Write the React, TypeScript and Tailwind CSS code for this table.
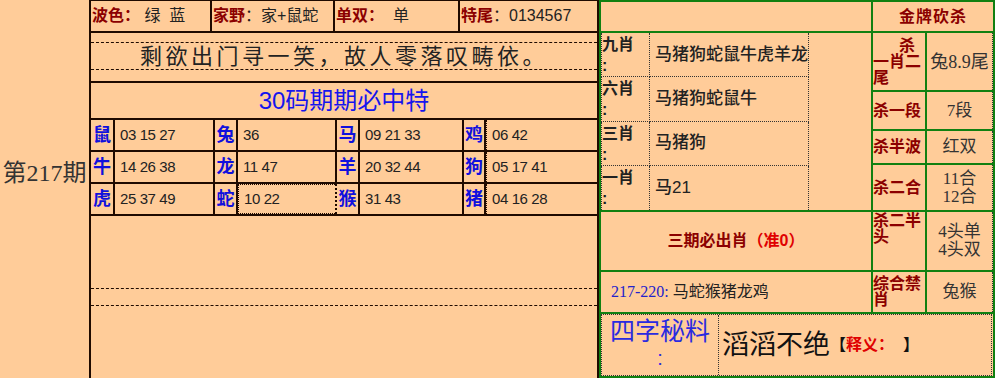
import React from "react";

const dark = "border-[#1f0a00]";
const serif = { fontFamily: '"Liberation Serif", "Noto Sans CJK SC", serif' };
const sans = { fontFamily: '"Liberation Sans", "Noto Sans CJK SC", sans-serif' };

const grid: [string, string][][] = [
  [["鼠", "03 15 27"], ["兔", "36"], ["马", "09 21 33"], ["鸡", "06 42"]],
  [["牛", "14 26 38"], ["龙", "11 47"], ["羊", "20 32 44"], ["狗", "05 17 41"]],
  [["虎", "25 37 49"], ["蛇", "10 22"], ["猴", "31 43"], ["猪", "04 16 28"]],
];

const xiao = [
  ["九肖", "马猪狗蛇鼠牛虎羊龙"],
  ["六肖", "马猪狗蛇鼠牛"],
  ["三肖", "马猪狗"],
  ["一肖", "马21"],
];

function Label({ children }: { children: React.ReactNode }) {
  return <span className="font-bold text-[#8b0000]">{children}</span>;
}

function MiddlePanel() {
  const colW = ["w-[24px]", "w-[100px]", "w-[23px]", "w-[99px]", "w-[23px]", "w-[104px]", "w-[22px]", "flex-1"];
  return (
    <div className={`w-[510px] h-full flex flex-col border-x-2 border-t ${dark}`} style={sans}>
      <div className={`h-[32px] flex border-b-2 ${dark} text-[16px] text-[#222] whitespace-pre`}>
        <div className={`w-[121px] border-r-2 ${dark} flex items-center pl-[1px]`}>
          <Label>波色：</Label>
          {" 绿  蓝"}
        </div>
        <div className={`w-[123px] border-r-2 ${dark} flex items-center pl-[1px]`}>
          <Label>家野</Label>
          {"：家+鼠蛇"}
        </div>
        <div className={`w-[125px] border-r-2 ${dark} flex items-center pl-[1px]`}>
          <Label>单双：</Label>
          {"  单"}
        </div>
        <div className="flex-1 flex items-center pl-[1px]">
          <Label>特尾</Label>
          {"：0134567"}
        </div>
      </div>
      <div className={`h-[50px] pt-[9px] border-b-2 ${dark}`}>
        <div
          className="h-[28px] border-y border-dashed border-[#1f0a00] flex items-center justify-center text-[22px] tracking-[3.5px] text-[#222]"
          style={serif}
        >
          剩欲出门寻一笑，故人零落叹畴依。
        </div>
      </div>
      <div className={`h-[37px] border-b-2 ${dark} flex items-center justify-center text-[24px] text-[#1515ee]`}>
        30码期期必中特
      </div>
      <div className="flex flex-col">
        {grid.map((row, r) => (
          <div key={r} className={`h-[32px] flex border-b-2 ${dark}`}>
            {row.flatMap(([z, n], c) => [
              <div
                key={`z${c}`}
                className={`${colW[c * 2]} border-r-2 ${dark} flex items-center justify-center text-[18px] font-bold text-[#1010dd]`}
                style={serif}
              >
                {z}
              </div>,
              <div
                key={`n${c}`}
                className={`${colW[c * 2 + 1]} ${c < 3 ? `border-r-2 ${dark}` : "border-l border-dotted border-[#1f0a00]"} ${
                  r === 2 && c === 1 ? "border border-dotted border-[#1f0a00]" : ""
                } flex items-center pl-[5px] text-[15px] tracking-[-0.4px] text-[#222] whitespace-pre`}
              >
                {n}
              </div>,
            ])}
          </div>
        ))}
      </div>
      <div className="flex-1">
        <div className="mt-[72px] h-[18px] border-y border-dashed border-[#1f0a00]" />
      </div>
    </div>
  );
}

function KillRow({ h, label, value, last }: { h: string; label: React.ReactNode; value: React.ReactNode; last?: boolean }) {
  return (
    <div className={`${h} flex ${last ? "" : "border-b-2 border-[#118011]"}`}>
      <div className="w-[54px] border-r-2 border-[#118011] text-[16px] leading-[16px] font-bold text-[#8b0000] flex flex-col justify-center">
        {label}
      </div>
      <div
        className="flex-1 border-r border-dotted border-[#333] flex flex-col items-center justify-center text-[#333] text-[17px] leading-[18px]"
        style={serif}
      >
        {value}
      </div>
    </div>
  );
}

function RightPanel() {
  return (
    <div className="w-[396px] h-full border-2 border-[#118011] flex flex-col" style={sans}>
      <div className="h-[310px] flex">
        <div className="w-[272px] border-r-2 border-[#118011] flex flex-col">
          <div className="h-[31px] border-b-2 border-[#118011]" />
          <div className="h-[179px] flex flex-col border-b-2 border-[#118011]">
            {xiao.map(([l, v], i) => (
              <div key={l} className="flex-1 flex">
                <div
                  className={`w-[49px] border-x border-dotted border-[#333] ${i < 3 ? "border-b" : ""} text-[16px] leading-[18px] font-bold text-[#222] pt-[3px]`}
                >
                  {l}
                  <div className="leading-[14px] mt-[5px]">:</div>
                </div>
                <div
                  className={`w-[159px] border-r border-dotted border-[#333] ${i < 3 ? "border-b" : ""} flex items-center pl-[5px] text-[17px] font-medium text-[#222]`}
                >
                  {v}
                </div>
              </div>
            ))}
          </div>
          <div className="h-[60px] border-b-2 border-[#118011] flex items-center justify-center text-[16px] font-bold text-[#8b0000]">
            三期必出肖<span className="text-[#e00000]">（准0）</span>
          </div>
          <div className="flex-1 flex items-center pl-[10px] text-[16px] text-[#222]">
            <span className="text-[#2222cc]" style={serif}>
              217-220:
            </span>
            <span className="ml-[4px]">马蛇猴猪龙鸡</span>
          </div>
        </div>
        <div className="flex-1 flex flex-col">
          <div className="h-[31px] border-b-2 border-[#118011] flex items-center justify-center text-[16px] font-bold text-[#8b0000] tracking-[1px]">
            金牌砍杀
          </div>
          <KillRow
            h="h-[59px]"
            label={
              <>
                <div className="pl-[26px]">杀</div>
                <div>一肖二</div>
                <div>尾</div>
              </>
            }
            value={<span className="text-[18px]">兔8.9尾</span>}
          />
          <KillRow h="h-[39px]" label="杀一段" value="7段" />
          <KillRow h="h-[34px]" label="杀半波" value="红双" />
          <KillRow
            h="h-[47px]"
            label="杀二合"
            value={
              <>
                <div>11合</div>
                <div>12合</div>
              </>
            }
          />
          <KillRow
            h="h-[60px]"
            label={<div className="self-start h-full pt-[1px]">杀二半头</div>}
            value={
              <>
                <div>4头单</div>
                <div>4头双</div>
              </>
            }
          />
          <KillRow last h="flex-1" label="综合禁肖" value="兔猴" />
        </div>
      </div>
      <div className="flex-1 border-t-2 border-[#118011] flex">
        <div className="flex-1 flex border border-dotted border-[#333] mr-[1px]">
          <div className="w-[117px] border-r border-dotted border-[#333] flex flex-col items-center pt-[2px] text-[25px] leading-[28px] text-[#2a2ae0]">
            四字秘料
            <div className="text-[20px] leading-[22px] mt-[2px]">:</div>
          </div>
          <div className="flex-1 flex items-center pl-[3px]">
            <span className="text-[27px] text-[#111]">滔滔不绝</span>
            <span className="text-[16px] font-bold text-[#111]">【</span>
            <span className="text-[16px] font-bold text-[#e00000] whitespace-pre">{"释义：  "}</span>
            <span className="text-[16px] font-bold text-[#111]">】</span>
          </div>
        </div>
      </div>
    </div>
  );
}

export default function App() {
  return (
    <div className="w-[995px] h-[378px] bg-[#ffcc99] flex overflow-hidden">
      <div className="w-[89px] h-full flex justify-center pt-[155px] text-[24px] text-[#333]" style={serif}>
        第217期
      </div>
      <MiddlePanel />
      <RightPanel />
    </div>
  );
}
